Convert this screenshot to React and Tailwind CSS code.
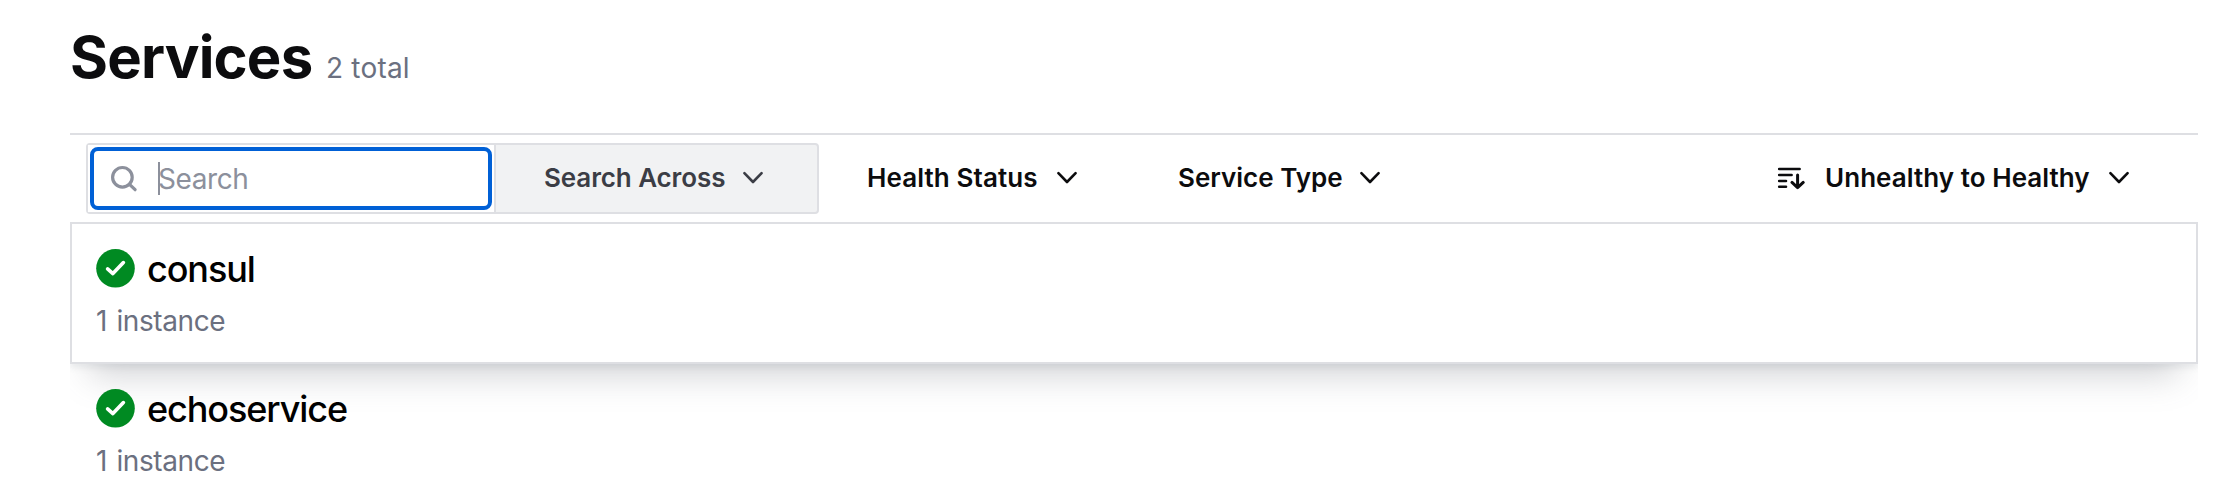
import React from "react";

function Chevron() {
  return (
    <svg className="h-6 w-6 shrink-0" viewBox="0 0 24 24" fill="none" stroke="currentColor" strokeWidth="2.6" strokeLinecap="round" strokeLinejoin="round">
      <path d="M3.4 7.2 12 16 20.6 7.2" />
    </svg>
  );
}

function SearchIcon() {
  return (
    <svg className="h-7 w-7 shrink-0 text-[#8c909c]" viewBox="0 0 28 28" fill="none" stroke="currentColor" strokeWidth="3.2" strokeLinecap="round">
      <circle cx="12.4" cy="12.3" r="9.8" />
      <path d="m19.5 19.3 5.6 5.4" />
    </svg>
  );
}

function SortIcon() {
  return (
    <svg className="h-7 w-7 shrink-0" viewBox="0 0 28 28" fill="none" stroke="currentColor" strokeWidth="2.6" strokeLinecap="round" strokeLinejoin="round">
      <path d="M2.2 5H22.6M2.2 11H14.6M2.2 17H9M2.2 22.8H9" />
      <path d="M20.6 11V23.4M15 18.4l5.6 5.2 5.6-5.2" strokeWidth="3" />
    </svg>
  );
}

function Passing() {
  return (
    <svg className="h-[39px] w-[39px] shrink-0" viewBox="0 0 39 39" fill="none">
      <circle cx="19.5" cy="19.3" r="19.3" fill="#008a22" />
      <path d="M11.6 19.9 16.9 24.6 27.4 13.6" stroke="#fff" strokeWidth="3.6" strokeLinecap="round" strokeLinejoin="round" />
    </svg>
  );
}

function Service({ name, className }) {
  return (
    <li className={"h-[142px] border-2 pl-6 pt-[25px] " + className}>
      <div className="flex h-[39px] items-center gap-[12px]">
        <Passing />
        <span className="pt-[2px] text-[36px] leading-[39px] font-medium tracking-[-1.1px] text-black">{name}</span>
      </div>
      <p className="mt-[16px] text-[28px] leading-[34px] tracking-[-0.4px] text-[#6b7080] [word-spacing:2px]">1 instance</p>
    </li>
  );
}

export default function App() {
  return (
    <main className="h-[498px] overflow-hidden bg-white pl-[70px] pr-[18px] font-['Inter',sans-serif] whitespace-nowrap">
      <header className="flex h-[133px] items-baseline pt-[21px]">
        <h1 className="w-[256px] text-[58px] leading-[72px] font-bold tracking-[-0.8px] text-[#0c0c0e]">Services</h1>
        <span className="text-[28px] tracking-[0.2px] text-[#6b7080]">2 total</span>
      </header>
      <div className="flex h-[91px] items-start border-y-2 border-[#dedfe3] pl-4 pt-2 text-[26px] font-semibold text-[#0c0c0e]">
        <div className="flex h-[71px] w-[733px] rounded-[4px] border-2 border-[#dedfe3] bg-[#f1f2f3]">
          <div className="w-[408px] shrink-0 border-r-2 border-[#dedfe3] bg-white p-[2px]">
            <div className="flex h-[63px] w-[402px] items-center rounded-[8px] border-4 border-[#0060d6] pl-[16px]">
              <SearchIcon />
              <span className="ml-5 h-[33px] w-[2px] bg-[#8c909c]" />
              <span className="-ml-[2px] text-[28px] font-normal tracking-[-0.4px] text-[#8c909c]">Search</span>
            </div>
          </div>
          <button className="flex flex-1 items-center pb-[2px] pl-[48px] text-[#3b3d45]">
            <span className="w-[197px] text-left tracking-[-0.1px]">Search Across</span>
            <Chevron />
          </button>
        </div>
        <button className="ml-[48px] flex h-[69px] w-[311px] items-center">
          <span className="w-[188px] text-left tracking-[0.1px]">Health Status</span>
          <Chevron />
        </button>
        <button className="flex h-[69px] items-center">
          <span className="w-[180px] text-left tracking-[0px]">Service Type</span>
          <Chevron />
        </button>
        <button className="mr-[67px] ml-auto flex h-[69px] items-center">
          <SortIcon />
          <span className="ml-[20px] w-[282px] text-left tracking-[0.05px]">Unhealthy to Healthy</span>
          <Chevron />
        </button>
      </div>
      <ul className="-mt-[2px] h-[276px] overflow-hidden">
        <Service name="consul" className="border-[#dedfe3] shadow-[0_4px_6px_#656a761a,0_32px_32px_-20px_#656a7648]" />
        <Service name="echoservice" className="-mt-[2px] border-transparent" />
      </ul>
    </main>
  );
}
